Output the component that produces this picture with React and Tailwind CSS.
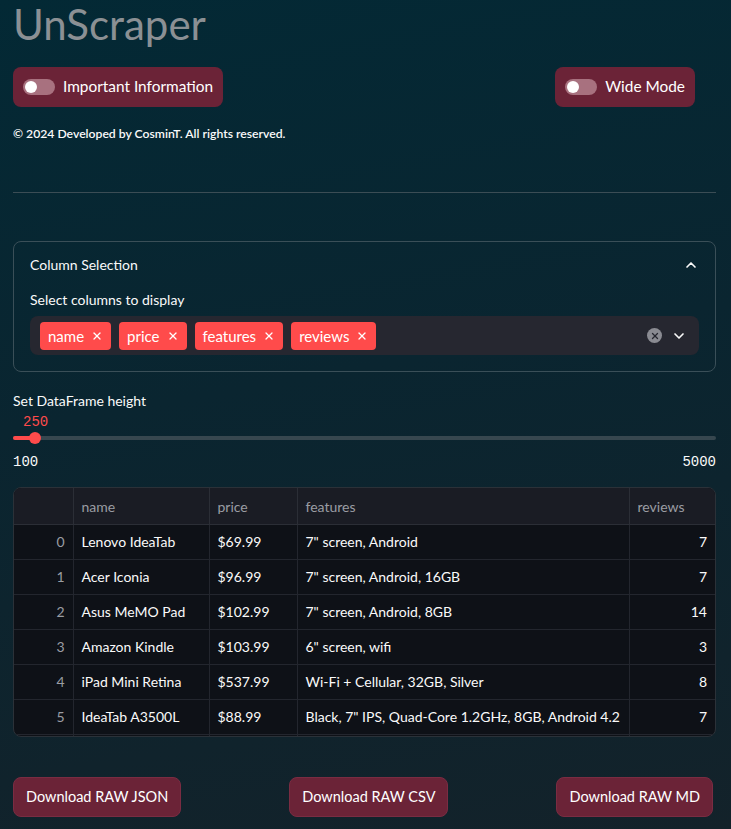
import { X, ChevronUp, ChevronDown } from 'lucide-react'

const rows = [
  { name: 'Lenovo IdeaTab', price: '$69.99', features: '7" screen, Android', reviews: 7 },
  { name: 'Acer Iconia', price: '$96.99', features: '7" screen, Android, 16GB', reviews: 7 },
  { name: 'Asus MeMO Pad', price: '$102.99', features: '7" screen, Android, 8GB', reviews: 14 },
  { name: 'Amazon Kindle', price: '$103.99', features: '6" screen, wifi', reviews: 3 },
  { name: 'iPad Mini Retina', price: '$537.99', features: 'Wi-Fi + Cellular, 32GB, Silver', reviews: 8 },
  { name: 'IdeaTab A3500L', price: '$88.99', features: 'Black, 7" IPS, Quad-Core 1.2GHz, 8GB, Android 4.2', reviews: 7 },
]

function Toggle({ label }) {
  return (
    <button className="flex h-10 items-center gap-2 rounded-lg bg-[#6b2337] px-[10px] text-[15.4px] text-white">
      <span className="flex h-4 w-8 items-center rounded-full bg-[#a8717f] px-[2px]">
        <span className="h-3 w-3 rounded-full bg-white" />
      </span>
      <span>{label}</span>
    </button>
  )
}

function Tag({ children }) {
  return (
    <span className="flex h-7 items-center gap-[7px] rounded bg-[#ff4b4b] px-2 text-[15px] text-white">
      {children}
      <X size={12} strokeWidth={2.5} />
    </span>
  )
}

function DlButton({ children }) {
  return (
    <button className="h-10 rounded-lg border border-[#7a2c42] bg-[#6b2337] px-3 text-[14.5px] text-white">
      {children}
    </button>
  )
}

export default function App() {
  return (
    <div className="min-h-screen bg-[linear-gradient(170deg,#032935_0%,#0a2530_45%,#13222a_100%)] pl-[13px] pr-[15px] font-['Lato',sans-serif] text-[#fafafa]">
      <h1 className="text-[42px] font-normal leading-[48px] text-[#8b9094]">UnScraper</h1>

      <div className="mt-[19px] flex justify-between pr-[21px]">
        <Toggle label="Important Information" />
        <Toggle label="Wide Mode" />
      </div>

      <p className="mt-[18px] text-[12.2px] font-semibold">© 2024 Developed by CosminT. All rights reserved.</p>

      <hr className="mt-[49px] border-t border-[#3b4d55]" />

      <section className="mt-[48px] rounded-lg border border-[#3a4f58] px-4 pb-4 pt-3">
        <div className="flex items-center justify-between">
          <span className="text-[14px]">Column Selection</span>
          <ChevronUp size={16} strokeWidth={2.5} />
        </div>
        <div className="mt-[14px] text-[14px]">Select columns to display</div>
        <div className="mt-[6px] flex h-[39px] items-center rounded-lg bg-[#262730] pl-[10px] pr-3">
          <div className="flex flex-1 gap-[8px]">
            <Tag>name</Tag>
            <Tag>price</Tag>
            <Tag>features</Tag>
            <Tag>reviews</Tag>
          </div>
          <span className="flex h-[15px] w-[15px] items-center justify-center rounded-full bg-[#8a8b92] text-[#262730]">
            <X size={10} strokeWidth={3} />
          </span>
          <ChevronDown size={16} strokeWidth={2.5} className="ml-[9px]" />
        </div>
      </section>

      <div className="mt-[18px] text-[14px]">Set DataFrame height</div>
      <div className="mt-[1px] pl-[10px] font-['Liberation_Mono',monospace] text-[14px] leading-5 text-[#ff4b4b]">250</div>
      <div className="flex h-3 items-center">
        <div className="flex h-1 flex-1 items-center rounded-full bg-[#37474f]">
          <div className="h-1 w-[22px] rounded-l-full bg-[#ff4b4b]" />
          <div className="-ml-[6px] h-3 w-3 rounded-full bg-[#ff4b4b]" />
        </div>
      </div>
      <div className="mt-[8px] flex justify-between font-['Liberation_Mono',monospace] text-[14px] leading-5">
        <span>100</span>
        <span>5000</span>
      </div>

      <div className="mt-[15px] h-[250px] overflow-hidden rounded-lg border border-[#2b3138] bg-[#0e1117] text-[14px]">
        <table className="w-full table-fixed border-collapse">
          <colgroup>
            <col className="w-[59px]" />
            <col className="w-[136px]" />
            <col className="w-[88px]" />
            <col className="w-[332px]" />
            <col />
          </colgroup>
          <thead>
            <tr className="h-[36px] bg-[#1a1c24] text-left text-[#9a9da3]">
              <th className="border-r border-b border-[#2b2e36] font-normal" />
              <th className="border-r border-b border-[#2b2e36] px-2 font-normal">name</th>
              <th className="border-r border-b border-[#2b2e36] px-2 font-normal">price</th>
              <th className="border-r border-b border-[#2b2e36] px-2 font-normal">features</th>
              <th className="border-b border-[#2b2e36] px-2 font-normal">reviews</th>
            </tr>
          </thead>
          <tbody>
            {rows.map((r, i) => (
              <tr key={i} className="h-[35px]">
                <td className="border-r border-b border-[#23262e] pr-2 text-right text-[#9a9da3]">{i}</td>
                <td className="border-r border-b border-[#23262e] px-2">{r.name}</td>
                <td className="border-r border-b border-[#23262e] px-2">{r.price}</td>
                <td className="whitespace-nowrap border-r border-b border-[#23262e] px-2">{r.features}</td>
                <td className="border-b border-[#23262e] px-2 text-right">{r.reviews}</td>
              </tr>
            ))}
            <tr className="h-[35px]">
              <td className="border-r border-[#23262e]" />
              <td className="border-r border-[#23262e]" />
              <td className="border-r border-[#23262e]" />
              <td className="border-r border-[#23262e]" />
              <td />
            </tr>
          </tbody>
        </table>
      </div>

      <div className="mt-[40px] flex justify-between pb-[13px] pr-[3px]">
        <DlButton>Download RAW JSON</DlButton>
        <DlButton>Download RAW CSV</DlButton>
        <DlButton>Download RAW MD</DlButton>
      </div>
    </div>
  )
}
